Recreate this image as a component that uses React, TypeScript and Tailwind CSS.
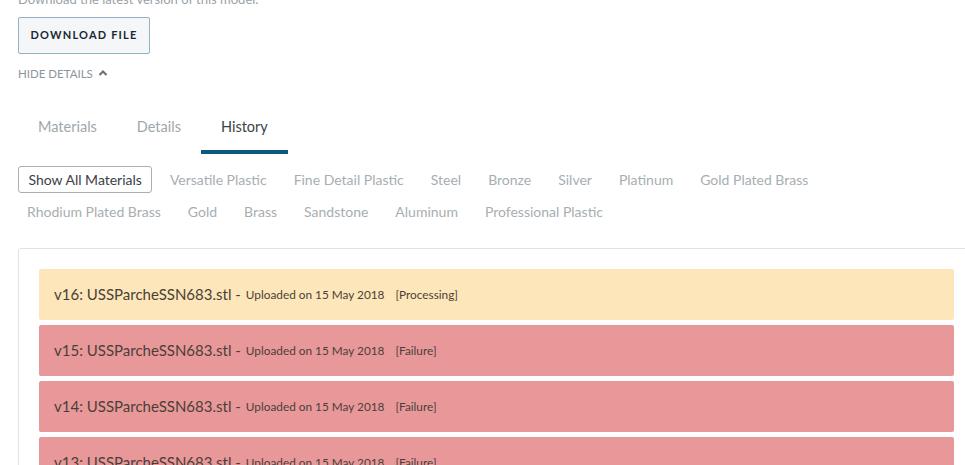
import React from "react";

const font = { fontFamily: "Lato, 'Open Sans', sans-serif" };

const row1 = ["Versatile Plastic", "Fine Detail Plastic", "Steel", "Bronze", "Silver", "Platinum", "Gold Plated Brass"];
const row2 = ["Rhodium Plated Brass", "Gold", "Brass", "Sandstone", "Aluminum", "Professional Plastic"];

const versions = [
  { v: "v16", status: "Processing", bg: "bg-[#fde6b9]" },
  { v: "v15", status: "Failure", bg: "bg-[#e9989a]" },
  { v: "v14", status: "Failure", bg: "bg-[#e9989a]" },
  { v: "v13", status: "Failure", bg: "bg-[#e9989a]" },
];

function Chip({ label }: { label: string }) {
  return <span className="px-[9px] mx-[4.5px] text-[#a7aeb2] h-[27px] flex items-center">{label}</span>;
}

export default function App() {
  return (
    <div className="w-[965px] h-[465px] overflow-hidden bg-white relative" style={font}>
      <div className="pl-[18px] -mt-[10px]">
        <p className="text-[13px] leading-[18px] text-[#9aa3a8]">Download the latest version of this model.</p>
        <button className="mt-[9px] h-[37px] w-[132px] border border-[#8fb1c3] rounded-[2px] bg-[#f4f6f8] text-[11px] font-bold tracking-[1.2px] text-[#1b2733]">
          DOWNLOAD FILE
        </button>
        <div className="mt-[13px] flex items-center gap-[5px] text-[11.5px] text-[#8b969c] leading-[14px]">
          <span>HIDE DETAILS</span>
          <svg width="10" height="8" viewBox="0 0 10 8" className="mb-[2px]">
            <path d="M1.5 6 L5 2.5 L8.5 6" stroke="#6b767c" strokeWidth="2.2" fill="none" />
          </svg>
        </div>
        <div className="mt-[28px] flex text-[14.5px] leading-[20px] h-[45px]">
          <div className="px-[20px] pt-[8px] text-[#9ea7ad]">Materials</div>
          <div className="px-[20px] pt-[8px] text-[#9ea7ad]">Details</div>
          <div className="px-[20px] pt-[8px] text-[#3c4348] border-b-[4px] border-[#0d5a7c]">History</div>
        </div>
        <div className="mt-[12px] flex flex-col gap-[5px] text-[14px] leading-[17px]">
          <div className="flex items-center">
            <button className="h-[27px] px-[9.5px] border border-[#a9b0b4] rounded-[3px] text-[#3a4147] mr-[4px]">Show All Materials</button>
            {row1.map((m) => (
              <Chip key={m} label={m} />
            ))}
          </div>
          <div className="flex items-center -ml-[4.5px]">
            {row2.map((m) => (
              <Chip key={m} label={m} />
            ))}
          </div>
        </div>
        <div className="mt-[23px] w-[957px] border border-[#e2e2e2] rounded-[3px] px-[20px] pt-[20px] flex flex-col gap-[5px]">
          {versions.map((r) => (
            <div key={r.v} className={`${r.bg} h-[51px] rounded-[2px] pl-[15px] flex items-center text-[#4a3f38]`}>
              <span className="text-[15px]">{r.v}: USSParcheSSN683.stl - </span>
              <span className="text-[11.8px] ml-[5px]">Uploaded on 15 May 2018</span>
              <span className="text-[11.8px] ml-[11px]">[{r.status}]</span>
            </div>
          ))}
        </div>
      </div>
    </div>
  );
}
